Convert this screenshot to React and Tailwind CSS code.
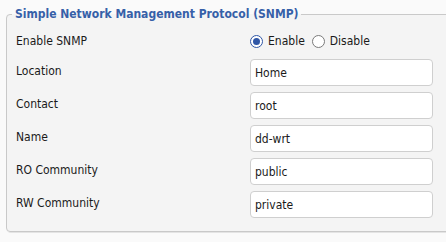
import React from "react";

const rows = [
  ["Location", "Home"],
  ["Contact", "root"],
  ["Name", "dd-wrt"],
  ["RO Community", "public"],
  ["RW Community", "private"],
];

function Radio({ checked }) {
  return checked ? (
    <span className="inline-flex h-[13px] w-[13px] items-center justify-center rounded-full border border-[#2f56a6] bg-white">
      <span className="h-[7px] w-[7px] rounded-full bg-[#2f56a6]" />
    </span>
  ) : (
    <span className="inline-block h-[13px] w-[13px] rounded-full border border-[#7a7a7a] bg-white" />
  );
}

export default function App() {
  return (
    <div className="h-[242px] w-[446px] overflow-hidden bg-[#fafafa] font-['DejaVu_Sans',sans-serif] text-[12px] text-[#1a1a1a] font-stretch-condensed">
      <fieldset className="ml-[6px] mt-[5px] w-[470px] rounded-[4px] border border-[#c9c9c9] bg-[#f4f4f4] pb-[10px] pl-[5px] shadow-[1px_1px_0_#e4e4e4]">
        <legend className="px-[3px] text-[12px] font-bold leading-[18px] text-[#3660a8]">
          Simple Network Management Protocol (SNMP)
        </legend>
        <div className="flex flex-col pl-[4px] pt-[3px]">
          <div className="flex h-[30px] items-center">
            <span className="w-[234px]">Enable SNMP</span>
            <label className="flex items-center">
              <Radio checked />
              <span className="ml-[5px]">Enable</span>
            </label>
            <label className="ml-[7px] flex items-center">
              <Radio />
              <span className="ml-[5px]">Disable</span>
            </label>
          </div>
          {rows.map(([label, value]) => (
            <div key={label} className="flex h-[33px] items-center">
              <span className="mb-[3px] w-[234px]">{label}</span>
              <div className="flex h-[27px] w-[183px] items-center rounded-[4px] border border-[#cfcfcf] bg-white pl-[4px] text-[#1a1a1a]">
                {value}
              </div>
            </div>
          ))}
        </div>
      </fieldset>
    </div>
  );
}
